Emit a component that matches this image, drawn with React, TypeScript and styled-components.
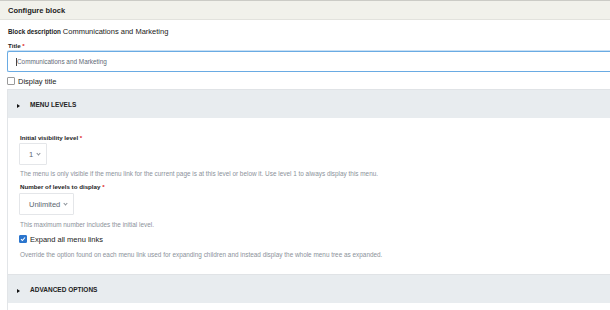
import styled, { createGlobalStyle } from 'styled-components'

const GlobalStyle = createGlobalStyle`
  html, body {
    margin: 0;
    padding: 0;
    background: #fff;
    font-family: "Liberation Sans", Arial, sans-serif;
    color: #222;
  }
  * {
    box-sizing: border-box;
  }
`

export default function App () {
  return (
    <>
      <GlobalStyle />
      <Page>
        <Header>Configure block</Header>
        <Body>
          <DescRow>
            <Strong>Block description</Strong>
            <span>Communications and Marketing</span>
          </DescRow>
          <Label>Title <Req>*</Req></Label>
          <TextInput>
            <Caret />
            Communications and Marketing
          </TextInput>
          <CheckRow top={4}>
            <Checkbox />
            <span>Display title</span>
          </CheckRow>

          <Panel top={3}>
            <Summary>
              <Arrow />
              MENU LEVELS
            </Summary>
            <PanelBody>
              <Label>Initial visibility level <Req>*</Req></Label>
              <Select width={28}>1 <Chevron /></Select>
              <Help top={4}>
                The menu is only visible if the menu link for the current page is at this level or below it. Use level 1 to always display this menu.
              </Help>
              <Label top={4} bottom={2}>Number of levels to display <Req>*</Req></Label>
              <Select width={55}>Unlimited <Chevron /></Select>
              <Help top={5}>This maximum number includes the initial level.</Help>
              <CheckRow top={5}>
                <Checkbox checked>
                  <svg width="6" height="6" viewBox="0 0 6 6">
                    <path d="M1 3.2 L2.4 4.5 L5 1.5" fill="none" stroke="#fff" strokeWidth="1.1" />
                  </svg>
                </Checkbox>
                <span>Expand all menu links</span>
              </CheckRow>
              <Help top={6}>
                Override the option found on each menu link used for expanding children and instead display the whole menu tree as expanded.
              </Help>
            </PanelBody>
          </Panel>

          <Panel>
            <Summary>
              <Arrow />
              ADVANCED OPTIONS
            </Summary>
            <PanelBody />
          </Panel>
        </Body>
      </Page>
    </>
  )
}

const Page = styled.div`
  width: 610px;
  height: 310px;
  overflow: hidden;
`

const Header = styled.div`
  height: 20px;
  display: flex;
  align-items: center;
  padding-left: 8px;
  background: #f1f1eb;
  border-top: 1px solid #cbcbc6;
  border-bottom: 1px solid #e2e2dd;
  font-size: 7.5px;
  font-weight: bold;
  color: #222;
`

const Body = styled.div`
  padding: 7px 0 0 7px;
  width: 640px;
`

const DescRow = styled.div`
  display: flex;
  align-items: baseline;
  gap: 2px;
  height: 10px;
  line-height: 10px;
  font-size: 7.5px;
  color: #222;
  margin-left: 1px;
  margin-bottom: 4px;
`

const Strong = styled.span`
  font-weight: bold;
  font-size: 6.3px;
`

const Label = styled.div<{ top?: number; bottom?: number }>`
  font-size: 6.2px;
  font-weight: bold;
  height: 9px;
  line-height: 9px;
  margin: ${p => p.top ?? 0}px 0 ${p => p.bottom ?? 1}px 1px;
`

const Req = styled.span`
  color: #dc2323;
`

const TextInput = styled.div`
  height: 21px;
  display: flex;
  align-items: center;
  padding-left: 8px;
  border: 1px solid #6aabe3;
  border-right: none;
  border-radius: 2px 0 0 2px;
  box-shadow: 0 -1px 0 #c9e0f4;
  font-size: 6.4px;
  color: #5f6b77;
`

const Caret = styled.span`
  display: inline-block;
  width: 1px;
  height: 8px;
  background: #444;
`

const CheckRow = styled.div<{ top: number }>`
  display: flex;
  align-items: center;
  gap: 3px;
  height: 10px;
  margin-top: ${p => p.top}px;
  font-size: 7.5px;
  color: #222;
`

const Checkbox = styled.span<{ checked?: boolean }>`
  width: 8px;
  height: 8px;
  display: inline-flex;
  align-items: center;
  justify-content: center;
  border: 1px solid ${p => (p.checked ? '#2b75cd' : '#9a9a9a')};
  background: ${p => (p.checked ? '#2b75cd' : '#fff')};
  border-radius: 1px;
`

const Panel = styled.div<{ top?: number }>`
  border-left: 1px solid #e2e5e8;
  margin-top: ${p => p.top ?? 0}px;
`

const Summary = styled.div`
  height: 29px;
  display: flex;
  align-items: center;
  padding-left: 9px;
  background: #e8ecef;
  border-top: 1px solid #e0e3e6;
  font-size: 6.5px;
  font-weight: bold;
  color: #222;
`

const Arrow = styled.span`
  width: 0;
  height: 0;
  border-top: 2px solid transparent;
  border-bottom: 2px solid transparent;
  border-left: 3.5px solid #111;
  margin-top: 4px;
  margin-right: 10px;
`

const PanelBody = styled.div`
  padding: 15px 0 15px 11px;
  min-height: 20px;
`

const Select = styled.div<{ width: number }>`
  width: ${p => p.width}px;
  height: 22px;
  display: flex;
  align-items: center;
  gap: 3px;
  padding-left: 9px;
  border: 1px solid #e4e6e9;
  border-radius: 1px;
  font-size: 7.5px;
  color: #5c6670;
`

const Chevron = styled.span`
  width: 3px;
  height: 3px;
  border-right: 1px solid #8a9199;
  border-bottom: 1px solid #8a9199;
  transform: rotate(45deg);
  margin-top: -2px;
  margin-left: 1px;
`

const Help = styled.div<{ top: number }>`
  font-size: 6.4px;
  color: #8b929a;
  height: 9px;
  line-height: 9px;
  margin: ${p => p.top}px 0 0 1px;
  white-space: nowrap;
`
